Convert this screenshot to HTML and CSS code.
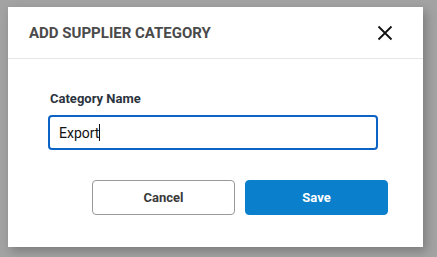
FILE: index.html
```html
<!DOCTYPE html>
<html>
<head>
<meta charset="utf-8">
<link rel="stylesheet" href="styles.css">
</head>
<body>
<div class="backdrop">
  <div class="dialog">
    <div class="header">
      <h2 class="title">ADD SUPPLIER CATEGORY</h2>
      <button class="close" aria-label="Close">
        <svg width="16" height="16" viewBox="0 0 16 16"><path d="M1.5 1.5 L14.5 14.5 M14.5 1.5 L1.5 14.5" stroke="#111" stroke-width="1.8" fill="none"/></svg>
      </button>
    </div>
    <div class="body">
      <label class="label">Category Name</label>
      <div class="input"><span class="value">Export</span><span class="caret"></span></div>
      <div class="actions">
        <button class="btn cancel">Cancel</button>
        <button class="btn save">Save</button>
      </div>
    </div>
  </div>
</div>
</body>
</html>
```
FILE: styles.css
```css
html, body {
  margin: 0;
  padding: 0;
  width: 437px;
  height: 257px;
  overflow: hidden;
  background: #a3a3a3;
  font-family: Roboto, "Liberation Sans", sans-serif;
}
.backdrop {
  padding: 7px 0 0 8px;
}
.dialog {
  width: 415px;
  height: 240px;
  background: #fff;
  box-shadow: 3px 4px 10px rgba(0,0,0,0.25);
  display: flex;
  flex-direction: column;
}
.header {
  height: 51px;
  border-bottom: 1px solid #e6e6e6;
  display: flex;
  align-items: center;
  justify-content: space-between;
  padding: 0 30px 0 21px;
}
.title {
  margin: 0;
  font-size: 15px;
  font-weight: 700;
  color: #4a4a4a;
  letter-spacing: 0;
}
.close {
  background: none;
  border: 0;
  padding: 0;
  width: 16px;
  height: 16px;
  display: flex;
}
.body {
  padding: 32px 0 0 40px;
  display: flex;
  flex-direction: column;
}
.label {
  font-size: 13px;
  font-weight: 700;
  color: #2b3440;
  margin: 0 0 9px 2px;
}
.input {
  height: 31px;
  border: 2px solid #0b63c6;
  border-radius: 4px;
  display: flex;
  align-items: center;
  padding-left: 9px;
  box-sizing: content-box;
  width: 317px;
}
.value {
  font-size: 14px;
  color: #111;
}
.caret {
  width: 1px;
  height: 17px;
  background: #111;
}
.actions {
  display: flex;
  gap: 10px;
  margin-top: 30px;
  margin-left: 44px;
}
.btn {
  width: 143px;
  height: 35px;
  border-radius: 4px;
  font-family: Roboto, "Liberation Sans", sans-serif;
  font-size: 13px;
  font-weight: 700;
  cursor: pointer;
}
.cancel {
  background: #fff;
  border: 1px solid #999;
  color: #3a3a3a;
}
.save {
  background: #0a80cc;
  border: 1px solid #0a80cc;
  color: #fff;
}
```
